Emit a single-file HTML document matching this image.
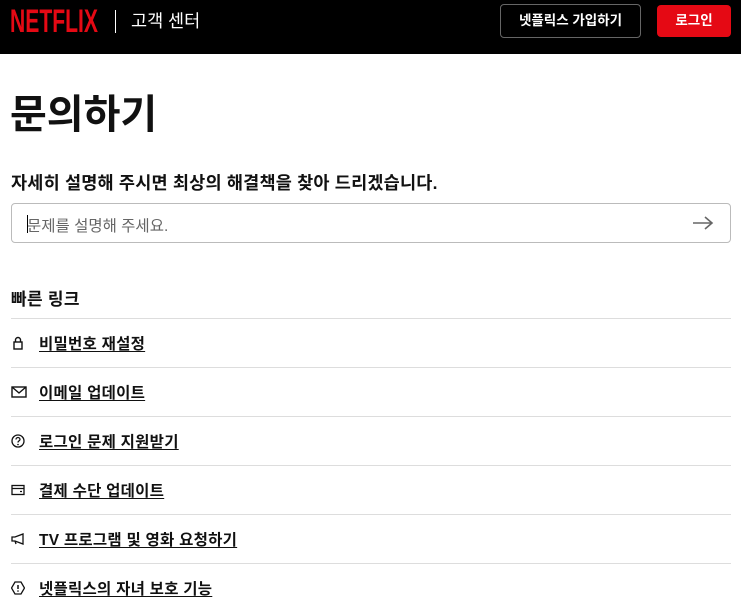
<!DOCTYPE html>
<html><head><meta charset="utf-8"><style>
*{margin:0;padding:0;box-sizing:border-box}
body{width:741px;height:604px;overflow:hidden;background:#fff;font-family:"Liberation Sans","Noto Sans CJK KR",sans-serif;color:#111}
.hdr{position:absolute;left:0;top:0;width:741px;height:54px;background:#000}
.logo{position:absolute;left:10px;top:3px;color:#e50914;font-family:"Liberation Sans Narrow","Liberation Sans",sans-serif;font-weight:bold;font-size:32px;transform:scaleX(.66);transform-origin:left;letter-spacing:0px}
.div{position:absolute;left:115px;top:10px;width:1px;height:23px;background:#fff}
.hc{position:absolute;left:131px;top:8px;color:#fff;font-size:17.5px}
.b1{position:absolute;left:500px;top:4px;width:141px;height:34px;border:1px solid #666;border-radius:4px;color:#fff;font-size:13.5px;font-weight:bold;text-align:center;line-height:32px}
.b2{position:absolute;left:657px;top:5px;width:74px;height:32px;background:#e50914;border-radius:4px;color:#fff;font-size:13.5px;font-weight:bold;text-align:center;line-height:32px}
h1{position:absolute;left:10px;top:82px;font-size:40px;font-weight:bold;letter-spacing:0}
.sub{position:absolute;left:11px;top:170px;font-size:17.5px;font-weight:bold;letter-spacing:.2px}
.inp{position:absolute;left:11px;top:203px;width:720px;height:40px;border:1px solid #bbb;border-radius:4px}
.inp span{position:absolute;left:15px;top:10px;font-size:15.5px;color:#666}
.inp .car{position:absolute;left:15px;top:11px;width:1px;height:18px;background:#000}
.arr{position:absolute;right:16px;top:10px}
.ql{position:absolute;left:11px;top:285px;font-size:17px;font-weight:bold;letter-spacing:.3px}
.row{position:absolute;left:11px;width:720px;height:49px;border-top:1px solid #ddd}
.row a{position:absolute;left:28px;top:13px;font-size:15.5px;font-weight:bold;color:#111;text-decoration:underline;text-underline-offset:2px;letter-spacing:.25px}
.row svg{position:absolute;left:0;top:17px}
</style></head><body>
<div class="hdr">
<div class="logo">NETFLIX</div><div class="div"></div><div class="hc">고객 센터</div>
<div class="b1">넷플릭스 가입하기</div><div class="b2">로그인</div>
</div>
<h1>문의하기</h1>
<div class="sub">자세히 설명해 주시면 최상의 해결책을 찾아 드리겠습니다.</div>
<div class="inp"><span>문제를 설명해 주세요.</span><div class="car"></div>
<svg class="arr" width="22" height="18" viewBox="0 0 22 18"><path d="M1 9H20M13 3l7 6-7 6" fill="none" stroke="#666" stroke-width="1.6"/></svg></div>
<div class="ql">빠른 링크</div>
<div class="row" style="top:318px"><svg width="14" height="14" viewBox="0 0 14 14"><rect x="3" y="6" width="8" height="7" fill="none" stroke="#111" stroke-width="1.4"/><path d="M4.5 6V4a2.5 2.5 0 015 0v2" fill="none" stroke="#111" stroke-width="1.4"/></svg><a>비밀번호 재설정</a></div>
<div class="row" style="top:367px"><svg width="16" height="14" viewBox="0 0 16 14"><rect x="1" y="2" width="14" height="10" fill="none" stroke="#111" stroke-width="1.4"/><path d="M1 2l7 6 7-6" fill="none" stroke="#111" stroke-width="1.4"/></svg><a>이메일 업데이트</a></div>
<div class="row" style="top:416px"><svg width="14" height="14" viewBox="0 0 14 14"><circle cx="7" cy="7" r="6" fill="none" stroke="#111" stroke-width="1.3"/><path d="M5 5.5a2 2 0 114 0c0 1.3-2 1.3-2 3" fill="none" stroke="#111" stroke-width="1.3"/><circle cx="7" cy="10.5" r=".8"/></svg><a>로그인 문제 지원받기</a></div>
<div class="row" style="top:465px"><svg width="14" height="14" viewBox="0 0 14 14"><rect x="1" y="2.5" width="12" height="9" fill="none" stroke="#111" stroke-width="1.3"/><path d="M1 5.5h12M9 8.5h2" stroke="#111" stroke-width="1.3"/></svg><a>결제 수단 업데이트</a></div>
<div class="row" style="top:514px"><svg width="14" height="14" viewBox="0 0 14 14"><path d="M1 5h3l8-3v10l-8-3H1zM4 9l1 3" fill="none" stroke="#111" stroke-width="1.3"/></svg><a>TV 프로그램 및 영화 요청하기</a></div>
<div class="row" style="top:563px"><svg width="14" height="14" viewBox="0 0 14 14"><path d="M4 1h6l3.5 6-3.5 6H4L.5 7z" fill="none" stroke="#111" stroke-width="1.3"/><path d="M7 4v4" stroke="#111" stroke-width="1.5"/><circle cx="7" cy="10" r=".8"/></svg><a>넷플릭스의 자녀 보호 기능</a></div>
</body></html>
